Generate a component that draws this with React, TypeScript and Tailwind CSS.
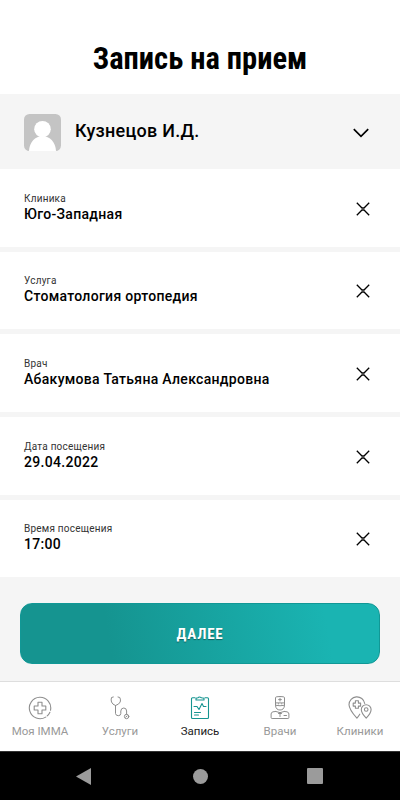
import type { ReactNode } from 'react';

interface Field {
  label: string;
  value: string;
}

interface Tab {
  name: string;
  icon: ReactNode;
  active?: boolean;
}

const fields: Field[] = [
  { label: 'Клиника', value: 'Юго-Западная' },
  { label: 'Услуга', value: 'Стоматология ортопедия' },
  { label: 'Врач', value: 'Абакумова Татьяна Александровна' },
  { label: 'Дата посещения', value: '29.04.2022' },
  { label: 'Время посещения', value: '17:00' },
];

const CircleCrossIcon = () => (
  <svg width="24" height="24" viewBox="0 0 24 24" fill="none" stroke="currentColor" strokeWidth="1.100">
    <path d="M22.500 14.300A10.700 10.700 0 1 0 17.700 21.100M21.900 16.200A10.700 10.700 0 0 1 19.200 19.900" strokeLinecap="round" />
    <path d="M10 6.200h4V10h3.800v4H14v3.800h-4V14H6.200v-4H10z" strokeLinejoin="round" />
  </svg>
);

const StethoscopeIcon = () => (
  <svg width="24" height="24" viewBox="0 0 24 24" fill="none" stroke="currentColor" strokeWidth="1" strokeLinecap="round" strokeLinejoin="round">
    <path d="M5.300 1L3.500 1.500Q2.800 4 3.500 6Q4.500 8.500 7.500 9.500Q11 8.500 12.200 6Q13 4 11.800 1.500L10 1" />
    <path d="M7.500 9.500V17.500Q7.800 19.700 10.300 19.700Q12.700 19.700 12.800 17.500V15Q13 12 15.800 12Q18.500 12 18.600 15V18.300" />
    <circle cx="18.600" cy="20.500" r="2.200" />
    <path d="M17.800 21l1.300-1" />
  </svg>
);

const ClipboardIcon = () => (
  <svg width="24" height="24" viewBox="0 0 24 24" fill="none" stroke="currentColor" strokeWidth="1.100" strokeLinecap="round" strokeLinejoin="round">
    <path d="M7 1.800H4.500a1 1 0 0 0-1 1v18.700a1 1 0 0 0 1 1H19.500a1 1 0 0 0 1-1V2.800a1 1 0 0 0-1-1H17" />
    <path d="M8 4V2.200l2-.5q1-1.400 3.500 0l2.500.5V4z" />
    <path d="M6 10.500h3l2 3 3-6 1.500 3h2.500M6.500 16.500h6M6.500 19h4" />
  </svg>
);

const DoctorIcon = () => (
  <svg width="24" height="24" viewBox="0 0 24 24" fill="none" stroke="currentColor" strokeWidth="1" strokeLinecap="round" strokeLinejoin="round">
    <path d="M7.500 6.500V2q0-1 1-1.200 3.500-.6 7 0 1 .2 1 1.200v4.500zM7.500 6.500v3q.5 4.500 4.500 4.500t4.500-4.500v-3M7.500 9.300q4.500 1 9 0M10.300 7.800h.3M13.500 7.800h.3M12 2.200v2.800M10.600 3.600h2.800" />
    <path d="M7.500 15.500l-2.500.3q-1.900.5-1.900 2.200V21.500q0 1 1 1h15.800q1 0 1-1V18q0-1.700-1.900-2.200l-2.500-.3M7.500 15.500q4.500 2.500 9 0M10.500 17.500h3M12 17.500v3M16 19.500h2.500" />
  </svg>
);

const PinsIcon = () => (
  <svg width="24" height="24" viewBox="0 0 24 24" fill="none" stroke="currentColor" strokeWidth="1.100" strokeLinecap="round" strokeLinejoin="round">
    <path d="M8.900 22.200Q1.200 13.500 1 8.700A7.900 7.900 0 0 1 16.700 7.500M8.900 22.200q1.500-1.800 2.900-4" />
    <path d="M7.400 4.800h3v2.300h2.200v3h-2.200v2.200h-3v-2.200H5.200v-3h2.200z" />
    <path d="M18.200 22.200q-4.900-5-4.900-8.600a4.900 4.900 0 0 1 9.800 0q0 3.600-4.900 8.600z" />
    <circle cx="18.200" cy="13.500" r="1.800" />
  </svg>
);

const tabs: Tab[] = [
  { name: 'Моя IMMA', icon: <CircleCrossIcon /> },
  { name: 'Услуги', icon: <StethoscopeIcon /> },
  { name: 'Запись', icon: <ClipboardIcon />, active: true },
  { name: 'Врачи', icon: <DoctorIcon /> },
  { name: 'Клиники', icon: <PinsIcon /> },
];

const PatientSelect = () => (
  <button className="flex h-[75px] w-full shrink-0 items-center bg-[#f5f5f5] pl-6 pr-[31px] text-left">
    <svg className="mt-px" width="37" height="37" viewBox="0 0 37 37">
      <rect width="37" height="37" rx="5.500" fill="#c4c4c4" />
      <circle cx="18.500" cy="15.200" r="8.300" fill="#fff" />
      <path d="M5 37c.5-9 6-14.800 13.500-14.800S31.500 28 32 37z" fill="#fff" />
    </svg>
    <span className="mb-0.5 ml-3.5 flex-1 text-[18px] font-medium leading-6 tracking-[0.260px]">Кузнецов И.Д.</span>
    <svg className="mt-[3px]" width="16" height="10" viewBox="0 0 16 10" fill="none" stroke="#000" strokeWidth="1.700">
      <path d="M.8 1.200L8 8.400l7.200-7.200" />
    </svg>
  </button>
);

const FieldRow = ({ label, value }: Field) => (
  <div className="flex h-[82.700px] items-start justify-between border-b-[5px] border-[#f5f5f5] bg-white pl-6 pr-[30px] pt-[22.500px] last:h-[77.700px] last:border-b-0">
    <div>
      <p className="text-[10px] leading-[13px] tracking-[0.220px] text-[#333]">{label}</p>
      <p className="text-[14px] font-medium leading-[18px] tracking-[0.300px]">{value}</p>
    </div>
    <button className="mt-[10px]">
      <svg width="14" height="14" viewBox="0 0 14 14" fill="none" stroke="#000" strokeWidth="1.300">
        <path d="M.8.8L6 6h2L13.200.8M.8 13.200L6 8h2l5.200 5.200" />
      </svg>
    </button>
  </div>
);

const SystemBar = () => (
  <div className="flex h-[49px] items-center justify-between border-t border-[#333] bg-black pl-[76px] pr-[77px]">
    <svg width="15" height="17" viewBox="0 0 15 17" fill="#9b9b9b"><path d="M15 0v17L0 8.500z" /></svg>
    <span className="ml-[2px] size-[15px] rounded-full bg-[#9b9b9b]" />
    <span className="size-4 rounded-[1px] bg-[#9b9b9b]" />
  </div>
);

export default function App() {
  return (
    <div className="flex h-[800px] w-[400px] flex-col overflow-hidden bg-white font-['Roboto',sans-serif] text-black">
      <header className="flex h-[94px] shrink-0 items-end justify-center pb-4">
        <h1 className="font-['Roboto_Condensed','Roboto',sans-serif] text-[30.500px] font-bold leading-[38px] font-stretch-condensed">Запись на прием</h1>
      </header>
      <PatientSelect />
      <main>
        {fields.map(field => (
          <FieldRow key={field.label} {...field} />
        ))}
      </main>
      <div className="flex flex-1 items-start bg-[#f5f5f5] px-5 pt-[25.500px]">
        <button className="h-[61px] w-full rounded-xl border border-[#119896] bg-[linear-gradient(80deg,#159490_25%,#1ab4b2_85%)] pt-0.5 font-['Roboto_Condensed','Roboto',sans-serif] text-[15px] font-bold tracking-[0.800px] text-white font-stretch-condensed [text-shadow:0_1px_1px_#0006]">ДАЛЕЕ</button>
      </div>
      <nav className="grid h-[70px] grid-cols-5 border-t border-[#dedede] bg-white">
        {tabs.map(tab => (
          <div key={tab.name} className="flex flex-col items-center gap-1 pt-[14px]">
            <span className={tab.active ? 'text-[#159490]' : 'text-[#8e8e8e]'}>{tab.icon}</span>
            <span className={`whitespace-nowrap text-[11.500px] leading-[15px] ${tab.active ? 'text-[#222]' : 'text-[#999]'}`}>{tab.name}</span>
          </div>
        ))}
      </nav>
      <SystemBar />
    </div>
  );
}
